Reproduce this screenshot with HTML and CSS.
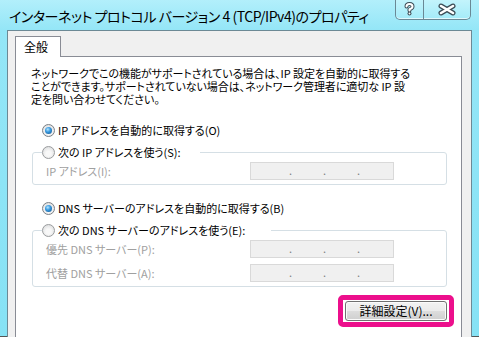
FILE: index.html
```html
<!DOCTYPE html>
<html lang="ja">
<head>
    <meta charset="UTF-8">
    <title>インターネット プロトコル バージョン 4 (TCP/IPv4)のプロパティ</title>
    <link rel="stylesheet" href="styles.css">
</head>
<body>
    <div class="window">
        <div class="titlebar">
            <div class="title">インターネット プロトコル バージョン 4 (TCP/IPv4)のプロパティ</div>
            <div class="caption-btns">
                <div class="cap-btn cap-help">
                    <svg width="27" height="19" viewBox="0 0 27 19">
                        <path d="M10.5 6.5 Q10.5 4 13.5 4 Q16.5 4 16.5 6.5 Q16.5 8.3 13.5 9.3 L13.5 10.5" fill="none" stroke="#3b4b55" stroke-width="4" stroke-linecap="round" stroke-linejoin="round"/>
                        <circle cx="13.5" cy="13.6" r="2" fill="#3b4b55"/>
                        <path d="M10.5 6.5 Q10.5 4 13.5 4 Q16.5 4 16.5 6.5 Q16.5 8.3 13.5 9.3 L13.5 10.5" fill="none" stroke="#fff" stroke-width="2" stroke-linecap="round" stroke-linejoin="round"/>
                        <circle cx="13.5" cy="13.6" r="1" fill="#fff"/>
                    </svg>
                </div>
                <div class="cap-btn cap-close">
                    <svg width="46" height="19" viewBox="0 0 46 19">
                        <path d="M17 6 L29 13 M29 6 L17 13" fill="none" stroke="#3b4b55" stroke-width="5" stroke-linecap="round"/>
                        <path d="M17 6 L29 13 M29 6 L17 13" fill="none" stroke="#fff" stroke-width="2.6" stroke-linecap="round"/>
                    </svg>
                </div>
            </div>
        </div>

        <div class="client">
            <div class="tabs">
                <div class="tab">全般</div>
            </div>
            <div class="panel">
                <p class="intro">ネットワークでこの機能がサポートされている場合は、IP 設定を自動的に取得する<br>ことができます。サポートされていない場合は、ネットワーク管理者に適切な IP 設<br>定を問い合わせてください。</p>

                <label class="option">
                    <span class="radio checked"></span>
                    <span>IP アドレスを自動的に取得する(O)</span>
                </label>
                <fieldset class="group">
                    <legend class="option legend-ip">
                        <span class="radio"></span>
                        <span>次の IP アドレスを使う(S):</span>
                    </legend>
                    <div class="field first">
                        <span class="label">IP アドレス(I):</span>
                        <span class="ipbox"><i>.</i><i>.</i><i>.</i></span>
                    </div>
                </fieldset>

                <label class="option after-group">
                    <span class="radio checked"></span>
                    <span>DNS サーバーのアドレスを自動的に取得する(B)</span>
                </label>
                <fieldset class="group">
                    <legend class="option legend-dns">
                        <span class="radio"></span>
                        <span>次の DNS サーバーのアドレスを使う(E):</span>
                    </legend>
                    <div class="field first">
                        <span class="label">優先 DNS サーバー(P):</span>
                        <span class="ipbox"><i>.</i><i>.</i><i>.</i></span>
                    </div>
                    <div class="field">
                        <span class="label">代替 DNS サーバー(A):</span>
                        <span class="ipbox"><i>.</i><i>.</i><i>.</i></span>
                    </div>
                </fieldset>

                <div class="actions">
                    <div class="highlight">
                        <button class="btn">詳細設定(V)...</button>
                    </div>
                </div>
            </div>
        </div>
    </div>
</body>
</html>
```

FILE: styles.css
```css
html, body {
    margin: 0;
    padding: 0;
}

body {
    width: 479px;
    height: 337px;
    overflow: hidden;
    font-family: "Noto Sans CJK JP", "Noto Sans", sans-serif;
    font-size: 11px;
    color: #000;
}

.window {
    box-sizing: border-box;
    height: 337px;
    background: linear-gradient(#b2effb, #94e6f7 30px, #86e2f5);
    padding: 0 7px;
    border-bottom: 1px solid #555;
    display: flex;
    flex-direction: column;
}

/* title bar */
.titlebar {
    height: 30px;
    display: flex;
    justify-content: space-between;
    align-items: flex-start;
    flex-shrink: 0;
}

.title {
    padding: 6px 0 0 2px;
    font-size: 14px;
    line-height: 20px;
    white-space: nowrap;
    font-feature-settings: "palt";
    letter-spacing: -0.45px;
}

.caption-btns {
    display: flex;
    margin-right: 1px;
    border: 1px solid #6a8895;
    border-top: none;
    border-radius: 0 0 5px 5px;
    background: linear-gradient(#c3f4fc, #a4ebf9);
    box-shadow: inset 0 -1px 0 #dff9fe;
}

.cap-btn {
    height: 19px;
}

.cap-btn svg {
    display: block;
}

.cap-close {
    border-left: 1px solid #6a8895;
}

/* client area */
.client {
    flex: 1;
    background: #f0f0f0;
    border: 1px solid #6c8995;
    border-bottom: none;
    padding: 5px 9px 0 7px;
}

.tabs {
    display: flex;
}

.tab {
    position: relative;
    z-index: 1;
    box-sizing: border-box;
    width: 46px;
    height: 21px;
    margin-bottom: -1px;
    padding: 2px 0 0 8px;
    background: #fff;
    border: 1px solid #898c95;
    border-bottom: none;
    font-size: 12px;
    line-height: 16px;
}

.panel {
    box-sizing: border-box;
    height: 290px;
    background: #fff;
    border: 1px solid #898c95;
    padding: 10px 7px 0 15px;
}

.intro {
    margin: 0;
    line-height: 13px;
    white-space: nowrap;
    font-feature-settings: "palt";
    letter-spacing: -0.05px;
}

/* radio options */
.option {
    display: flex;
    align-items: center;
    height: 16px;
    margin: 16px 0 0 11px;
    white-space: nowrap;
    font-feature-settings: "palt";
}

.option.after-group {
    margin-top: 15px;
}

.radio {
    box-sizing: border-box;
    width: 13px;
    height: 13px;
    margin-right: 3px;
    border-radius: 50%;
    border: 1px solid #9a9c9e;
    background: radial-gradient(circle at 50% 60%, #f8f8f8 30%, #d4d5d6 100%);
    display: flex;
    align-items: center;
    justify-content: center;
    flex-shrink: 0;
}

.radio.checked {
    border-color: #7b8086;
}

.radio.checked::after {
    content: "";
    width: 7px;
    height: 7px;
    border-radius: 50%;
    background: radial-gradient(circle at 40% 35%, #b6e6ff 0, #3a9be0 40%, #0a4e8a 100%);
}

/* group boxes */
.group {
    box-sizing: border-box;
    width: 415px;
    margin: 6px 0 0 1px;
    padding: 0 0 4px 0;
    border: 1px solid #d5dfe5;
    border-radius: 3px;
}

.group legend.option {
    margin: 0 0 0 9px;
    padding: 0;
    box-sizing: border-box;
}

.legend-ip {
    width: 158px;
}

.legend-dns {
    width: 229px;
}

.field {
    display: grid;
    grid-template-columns: 204px 144px;
    align-items: center;
    margin-top: 6px;
    padding-left: 13px;
}

.field.first {
    margin-top: 2px;
}

.label {
    color: #a0a0a0;
    white-space: nowrap;
    font-feature-settings: "palt";
}

.ipbox {
    box-sizing: border-box;
    height: 18px;
    background: #f0f0f0;
    border: 1px solid #d9d9d9;
    display: flex;
    padding-left: 38px;
    color: #808080;
    line-height: 14px;
}

.ipbox i {
    font-style: normal;
    width: 34px;
    font-size: 11px;
}

/* button */
.actions {
    display: flex;
    justify-content: flex-end;
    margin-top: 8px;
}

.highlight {
    border: 5px solid #ec0f8c;
    border-radius: 5px;
    padding: 1px 2px;
    background: #fff;
}

.btn {
    display: block;
    box-sizing: border-box;
    width: 102px;
    height: 20px;
    padding: 0;
    border: 1px solid #707070;
    border-radius: 3px;
    background: linear-gradient(#f2f2f2 0, #ebebeb 50%, #dddddd 51%, #cfcfcf 100%);
    box-shadow: inset 0 0 0 1px #fbfbfb;
    font-family: "Noto Sans CJK JP", "Noto Sans", sans-serif;
    font-size: 12px;
    line-height: 16px;
    color: #000;
    font-feature-settings: "palt";
}
```
